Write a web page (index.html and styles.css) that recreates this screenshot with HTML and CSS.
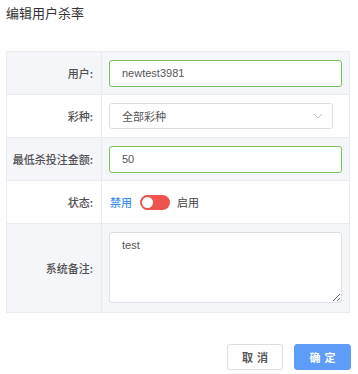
FILE: index.html
```html
<!DOCTYPE html>
<html lang="zh-CN">

<head>
    <meta charset="UTF-8">
    <meta name="viewport" content="width=device-width, initial-scale=1.0">
    <title>编辑用户杀率</title>
    <link rel="stylesheet" href="styles.css">
</head>

<body>
    <div class="dialog">
        <div class="title">编辑用户杀率</div>
        <div class="form">
            <div class="row stripe">
                <div class="label">用户:</div>
                <div class="value"><input class="field ok" type="text" value="newtest3981"></div>
            </div>
            <div class="row">
                <div class="label">彩种:</div>
                <div class="value">
                    <div class="select">
                        <span>全部彩种</span>
                        <svg width="10" height="6" viewBox="0 0 10 6"><path d="M1 1l4 4 4-4" fill="none" stroke="#c0c4cc" stroke-width="1"/></svg>
                    </div>
                </div>
            </div>
            <div class="row stripe">
                <div class="label">最低杀投注金额:</div>
                <div class="value"><input class="field ok" type="text" value="50"></div>
            </div>
            <div class="row">
                <div class="label">状态:</div>
                <div class="value switchbox">
                    <span class="off">禁用</span>
                    <span class="switch"><span class="knob"></span></span>
                    <span class="on">启用</span>
                </div>
            </div>
            <div class="row stripe tall">
                <div class="label">系统备注:</div>
                <div class="value top"><textarea class="area">test</textarea></div>
            </div>
        </div>
        <div class="footer">
            <button class="btn">取消</button>
            <button class="btn primary">确定</button>
        </div>
    </div>
</body>

</html>
```

FILE: styles.css
```css
body {
    margin: 0;
    background-color: #fff;
    font-family: "Liberation Sans", "Noto Sans CJK SC", sans-serif;
    color: #555;
}

.dialog {
    width: 358px;
    height: 374px;
    padding: 4px 0 0 6px;
    box-sizing: border-box;
}

.title {
    font-family: "Noto Sans CJK SC", sans-serif;
    font-size: 13px;
    line-height: 18px;
    color: #333;
}

.form {
    margin-top: 29px;
    width: 344px;
    border: 1px solid #e9ebf0;
    border-bottom: none;
    box-sizing: border-box;
}

.row {
    display: grid;
    grid-template-columns: 95px 1fr;
    height: 43px;
    border-bottom: 1px solid #e9ebf0;
    box-sizing: border-box;
}

.stripe {
    background-color: #f5f6fa;
}

.tall {
    height: 89px;
}

.label {
    display: flex;
    align-items: center;
    justify-content: flex-end;
    padding-right: 8px;
    border-right: 1px solid #e9ebf0;
    font-family: "Noto Sans CJK SC", sans-serif;
    font-size: 11px;
    font-weight: 500;
    color: #505050;
}

.value {
    display: flex;
    align-items: center;
    padding: 0 7px;
}

.value.top {
    align-items: flex-start;
    padding-top: 8px;
}

.field,
.select,
.area {
    width: 233px;
    height: 27px;
    border: 1px solid #dcdfe6;
    border-radius: 3px;
    background-color: #fff;
    box-sizing: border-box;
    padding: 0 12px;
    font-family: "Liberation Sans", "Noto Sans CJK SC", sans-serif;
    font-size: 11px;
    color: #555;
    outline: none;
}

.field.ok {
    border-color: #7cc05c;
}

.select {
    width: 224px;
    height: 26px;
    display: flex;
    align-items: center;
    justify-content: space-between;
    padding-right: 9px;
}

.select span {
    font-family: "Noto Sans CJK SC", sans-serif;
}

.area {
    height: 71px;
    padding: 6px 12px;
    resize: vertical;
}

.switchbox {
    font-family: "Noto Sans CJK SC", sans-serif;
    font-size: 11px;
}

.off {
    color: #3d8ef0;
    font-weight: 500;
    margin-left: 1px;
}

.switch {
    position: relative;
    width: 30px;
    height: 15px;
    border-radius: 8px;
    background-color: #ef5350;
    margin: 0 7px 0 8px;
}

.knob {
    position: absolute;
    left: 2px;
    top: 2px;
    width: 11px;
    height: 11px;
    border-radius: 50%;
    background-color: #fff;
}

.on {
    color: #444;
}

.footer {
    display: flex;
    justify-content: flex-end;
    gap: 11px;
    margin-top: 31px;
    padding-right: 7px;
}

.btn {
    width: 56px;
    height: 26px;
    border: 1px solid #dcdfe6;
    border-radius: 3px;
    background-color: #fff;
    font-family: "Noto Sans CJK SC", sans-serif;
    font-size: 11px;
    font-weight: bold;
    letter-spacing: 4px;
    text-indent: 4px;
    color: #555;
}

.btn.primary {
    width: 57px;
    background-color: #5d9cf8;
    border-color: #5d9cf8;
    color: #fff;
}
```
